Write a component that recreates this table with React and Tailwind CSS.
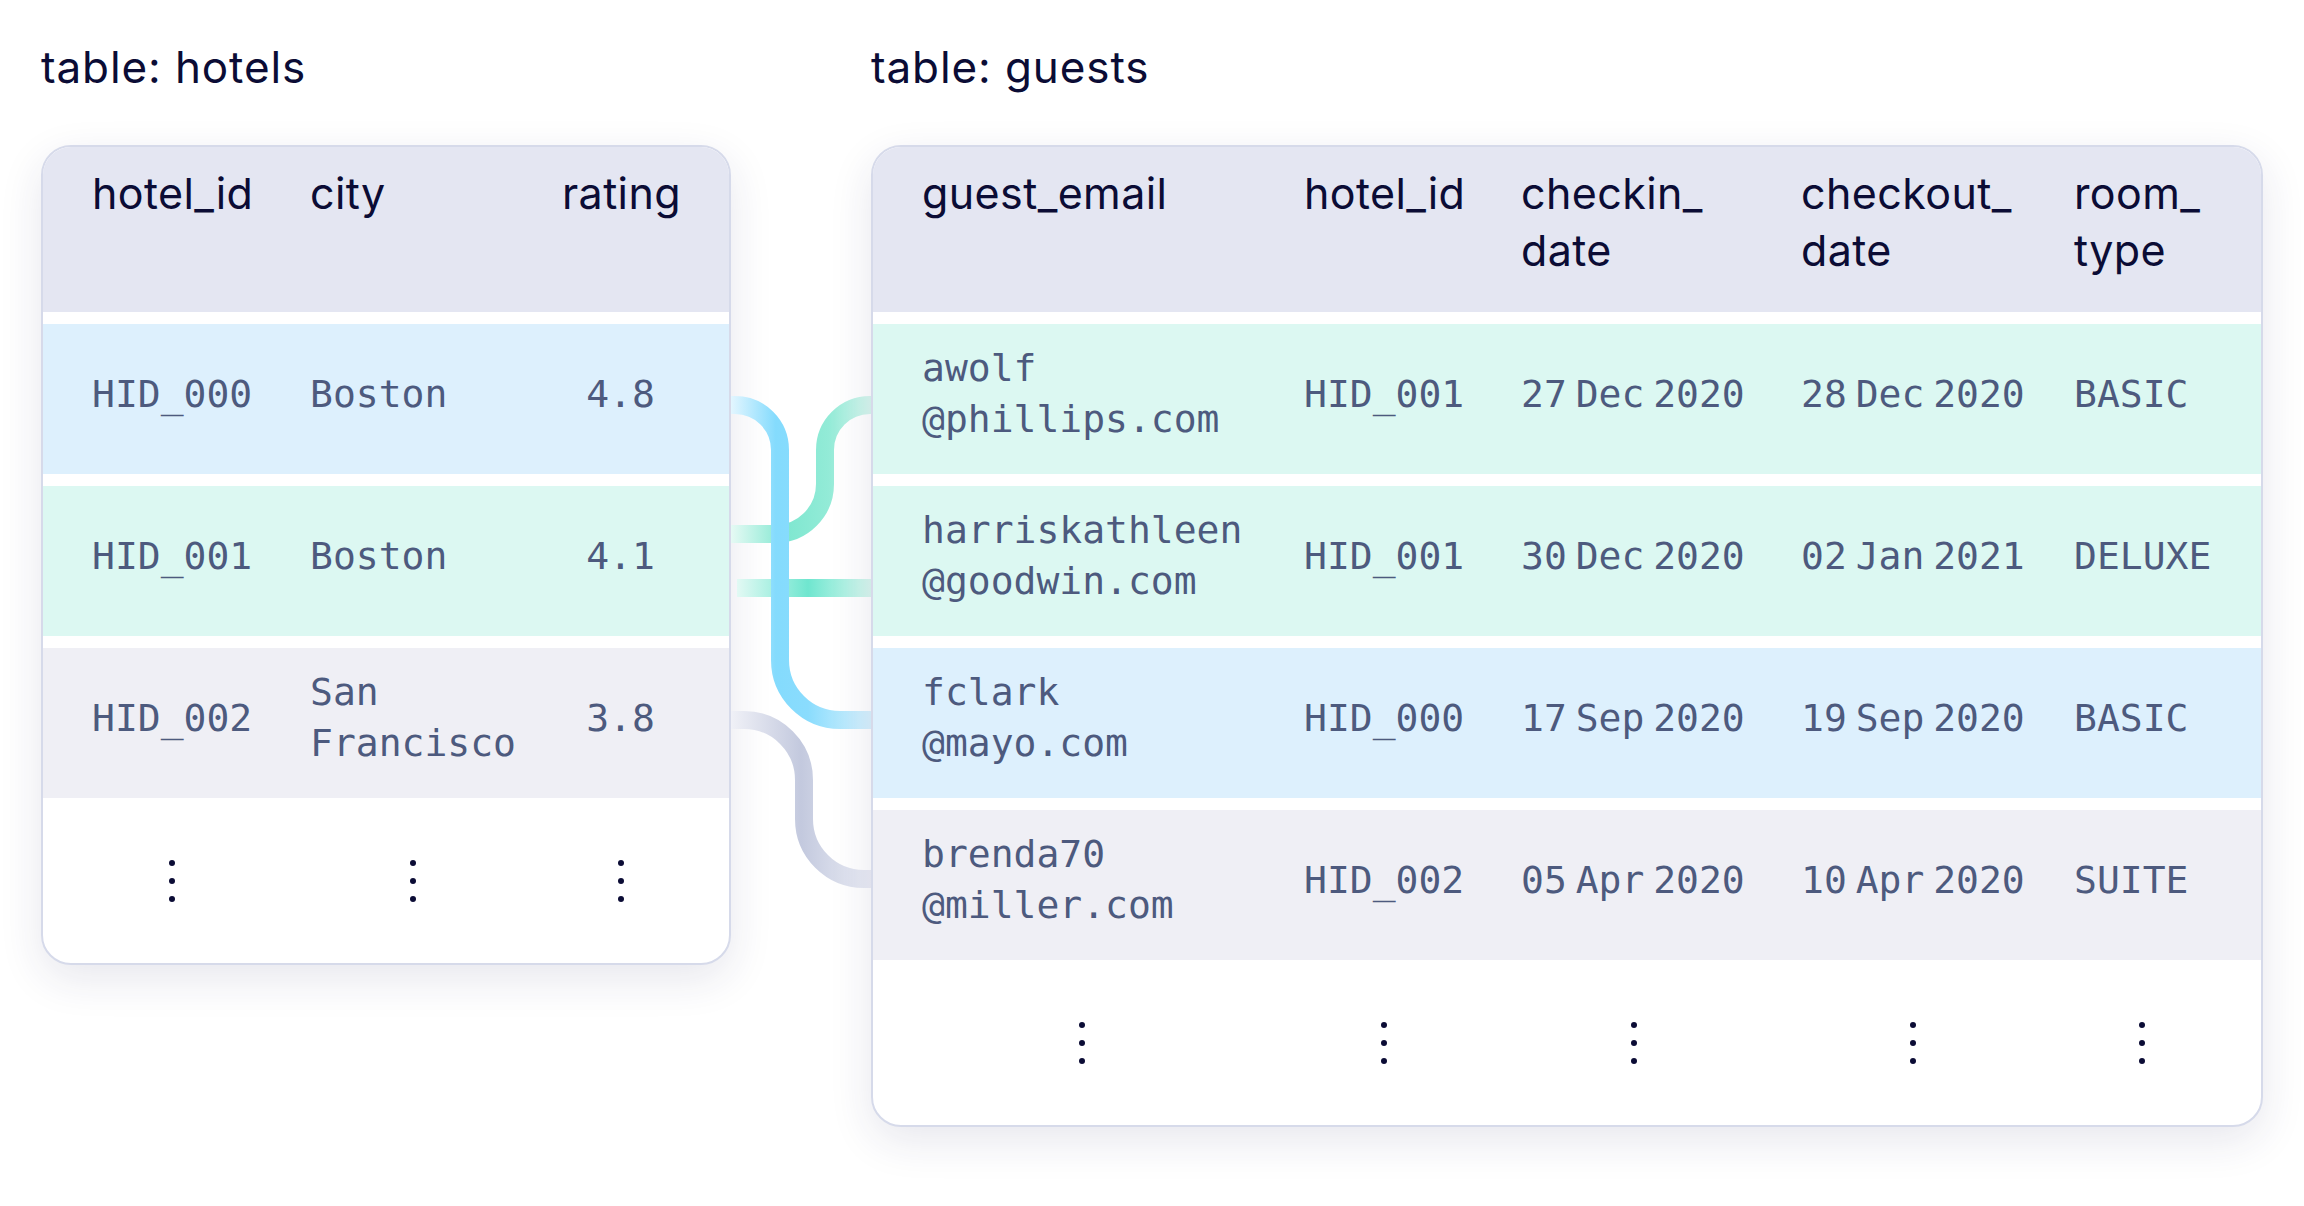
const sans = "font-['Inter','Liberation_Sans',sans-serif]";
const mono = "font-['DejaVu_Sans_Mono','Liberation_Mono',monospace]";

const hotelCols = [
  { cell: 'w-[218px]', inner: 'w-[160px]' },
  { cell: 'w-[252px]', inner: 'w-[206px]' },
  { cell: 'w-[117px]', inner: 'w-[117px]', center: true },
];

const guestCols = [
  { cell: 'w-[382px]', inner: 'w-[320px]' },
  { cell: 'w-[217px]', inner: 'w-[160px]' },
  { cell: 'w-[280px]', inner: 'w-[226px]' },
  { cell: 'w-[273px]', inner: 'w-[223px]' },
  { cell: 'w-[135px]', inner: 'w-[135px]' },
];

const rowBg = {
  blue: 'bg-[#ddf0fd]',
  mint: 'bg-[#dcf8f2]',
  gray: 'bg-[#efeff5]',
};

const hotels = {
  head: ['hotel_id', 'city', 'rating'],
  rows: [
    { tone: 'blue', cells: ['HID_000', 'Boston', '4.8'] },
    { tone: 'mint', cells: ['HID_001', 'Boston', '4.1'] },
    { tone: 'gray', cells: ['HID_002', ['San', 'Francisco'], '3.8'] },
  ],
};

const guests = {
  head: ['guest_email', 'hotel_id', ['checkin_', 'date'], ['checkout_', 'date'], ['room_', 'type']],
  rows: [
    { tone: 'mint', cells: [['awolf', '@phillips.com'], 'HID_001', '27 Dec 2020', '28 Dec 2020', 'BASIC'] },
    { tone: 'mint', cells: [['harriskathleen', '@goodwin.com'], 'HID_001', '30 Dec 2020', '02 Jan 2021', 'DELUXE'] },
    { tone: 'blue', cells: [['fclark', '@mayo.com'], 'HID_000', '17 Sep 2020', '19 Sep 2020', 'BASIC'] },
    { tone: 'gray', cells: [['brenda70', '@miller.com'], 'HID_002', '05 Apr 2020', '10 Apr 2020', 'SUITE'] },
  ],
};

function Lines({ value }) {
  const parts = Array.isArray(value) ? value : [value];
  return parts.map((p, i) => <div key={i} className="whitespace-nowrap">{p}</div>);
}

function Dots() {
  return (
    <div className="flex flex-col items-center gap-[12px]">
      <div className="h-[6px] w-[6px] rounded-full bg-[#0b0c35]" />
      <div className="h-[6px] w-[6px] rounded-full bg-[#0b0c35]" />
      <div className="h-[6px] w-[6px] rounded-full bg-[#0b0c35]" />
    </div>
  );
}

function Table({ cols, data }) {
  return (
    <div className="overflow-hidden rounded-[30px] border-2 border-[#d6daea] bg-white shadow-[0_14px_44px_rgba(40,40,90,0.11)]">
      {/* header */}
      <div className={`flex h-[165px] bg-[#e4e6f2] pl-[49px] pt-[18px] text-[43px] leading-[57px] tracking-[0.4px] text-[#0b0c35] ${sans}`}>
        {data.head.map((h, i) => (
          <div key={i} className={cols[i].cell}>
            <div className={`${cols[i].inner} ${cols[i].center ? 'text-center' : ''}`}>
              <Lines value={h} />
            </div>
          </div>
        ))}
      </div>

      {data.rows.map((r, ri) => (
        <div
          key={ri}
          className={`mt-3 flex h-[150px] items-center pb-[10px] pl-[49px] text-[38px] leading-[51px] text-[#4d5a7e] [word-spacing:-14px] ${mono} ${rowBg[r.tone]}`}
        >
          {r.cells.map((c, i) => (
            <div key={i} className={cols[i].cell}>
              <div className={`${cols[i].inner} ${cols[i].center ? 'text-center' : ''}`}>
                <Lines value={c} />
              </div>
            </div>
          ))}
        </div>
      ))}

      {/* more rows */}
      <div className="flex h-[165px] items-center pl-[49px]">
        {cols.map((c, i) => (
          <div key={i} className={c.cell}>
            <div className={`${c.inner} flex justify-center`}>
              <Dots />
            </div>
          </div>
        ))}
      </div>
    </div>
  );
}

function Connectors() {
  return (
    <svg width="140" height="760" viewBox="0 0 140 760" fill="none">
      <defs>
        <linearGradient id="gBlue" gradientUnits="userSpaceOnUse" x1="0" y1="0" x2="140" y2="0">
          <stop offset="0" stopColor="#e3f6ff" />
          <stop offset="0.32" stopColor="#84dbfd" />
          <stop offset="0.55" stopColor="#8adcfd" />
          <stop offset="1" stopColor="#dbf3fe" />
        </linearGradient>
        <linearGradient id="gMint" gradientUnits="userSpaceOnUse" x1="0" y1="0" x2="140" y2="0">
          <stop offset="0" stopColor="#e6faf4" />
          <stop offset="0.4" stopColor="#7fe7d0" />
          <stop offset="0.7" stopColor="#93ebd7" />
          <stop offset="1" stopColor="#dbf8f0" />
        </linearGradient>
        <linearGradient id="gMint2" gradientUnits="userSpaceOnUse" x1="0" y1="0" x2="140" y2="0">
          <stop offset="0" stopColor="#ecfbf7" />
          <stop offset="0.55" stopColor="#6fe6cf" />
          <stop offset="1" stopColor="#dcf8f0" />
        </linearGradient>
        <linearGradient id="gGray" gradientUnits="userSpaceOnUse" x1="0" y1="0" x2="140" y2="0">
          <stop offset="0" stopColor="#f0f1f7" />
          <stop offset="0.5" stopColor="#c3c9de" />
          <stop offset="1" stopColor="#eceef6" />
        </linearGradient>
      </defs>
      <path d="M -2 575 H 13 A 60 60 0 0 1 73 635 V 674 A 60 60 0 0 0 133 734 H 142" stroke="url(#gGray)" strokeWidth="18" />
      <path d="M -2 389 H 44 A 50 50 0 0 0 94 339 V 305 A 45 45 0 0 1 139 260 H 142" stroke="url(#gMint)" strokeWidth="18" />
      <path d="M 6 443 H 142" stroke="url(#gMint2)" strokeWidth="18" />
      <path d="M -2 260 H 4 A 45 45 0 0 1 49 305 V 515 A 60 60 0 0 0 109 575 H 142" stroke="url(#gBlue)" strokeWidth="18" />
    </svg>
  );
}

export default function App() {
  return (
    <div className="min-h-screen bg-white pl-[41px] pt-[39px]">
      <div className="grid grid-cols-[690px_140px_1392px] items-start gap-y-[49px]">
        <h2 className={`text-[44px] leading-[57px] tracking-[0.9px] text-[#0b0c35] ${sans}`}>table: hotels</h2>
        <div />
        <h2 className={`text-[44px] leading-[57px] tracking-[0.9px] text-[#0b0c35] ${sans}`}>table: guests</h2>

        <Table cols={hotelCols} data={hotels} />
        <Connectors />
        <Table cols={guestCols} data={guests} />
      </div>
    </div>
  );
}
